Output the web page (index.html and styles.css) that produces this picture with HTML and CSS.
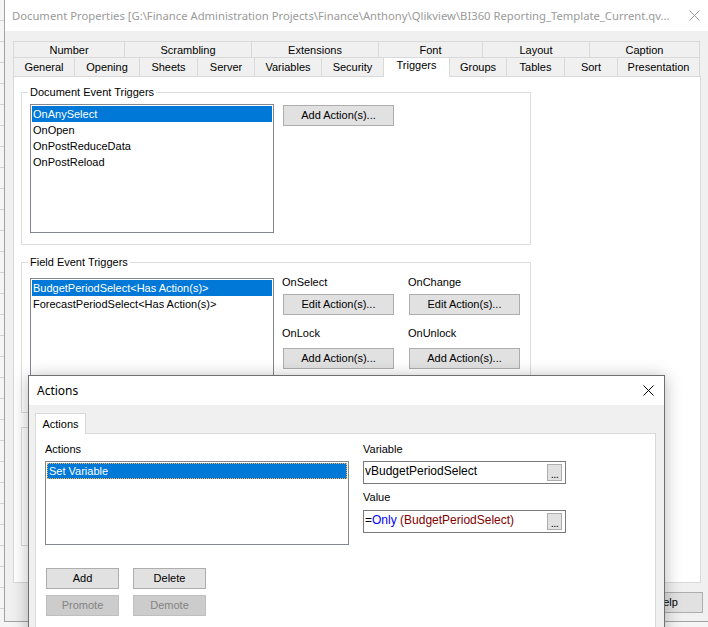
FILE: index.html
```html
<!DOCTYPE html>
<html lang="en">
<head>
<meta charset="utf-8">
<title>Document Properties</title>
<link rel="stylesheet" href="styles.css">
</head>
<body>
<div class="desk">
  <section class="win main">
    <header class="titlebar">
      <span class="title">Document Properties [G:\Finance Administration Projects\Finance\Anthony\Qlikview\BI360 Reporting_Template_Current.qv...</span>
      <svg class="xicon" width="11" height="11" viewBox="0 0 11 11"><path d="M0.5 0.5 L10.5 10.5 M10.5 0.5 L0.5 10.5" stroke="#9a9a9a" stroke-width="1" fill="none"/></svg>
    </header>
    <div class="win-body">
      <div class="tabrow row1">
        <div class="tab">Number</div>
        <div class="tab">Scrambling</div>
        <div class="tab">Extensions</div>
        <div class="tab">Font</div>
        <div class="tab">Layout</div>
        <div class="tab">Caption</div>
      </div>
      <div class="tabrow row2">
        <div class="tab">General</div>
        <div class="tab">Opening</div>
        <div class="tab">Sheets</div>
        <div class="tab">Server</div>
        <div class="tab">Variables</div>
        <div class="tab">Security</div>
        <div class="tab active">Triggers</div>
        <div class="tab">Groups</div>
        <div class="tab">Tables</div>
        <div class="tab">Sort</div>
        <div class="tab">Presentation</div>
      </div>
      <div class="panel">
        <fieldset class="group g1">
          <legend>Document Event Triggers</legend>
          <div class="listbox lb1">
            <div class="item sel">OnAnySelect</div>
            <div class="item">OnOpen</div>
            <div class="item">OnPostReduceData</div>
            <div class="item">OnPostReload</div>
          </div>
          <button class="btn wide b1">Add Action(s)...</button>
        </fieldset>
        <fieldset class="group g2">
          <legend>Field Event Triggers</legend>
          <div class="listbox lb2">
            <div class="item sel">BudgetPeriodSelect&lt;Has Action(s)&gt;</div>
            <div class="item">ForecastPeriodSelect&lt;Has Action(s)&gt;</div>
          </div>
          <div class="ctrls">
            <div class="cell">
              <div class="lbl">OnSelect</div>
              <button class="btn wide">Edit Action(s)...</button>
            </div>
            <div class="cell">
              <div class="lbl">OnChange</div>
              <button class="btn wide">Edit Action(s)...</button>
            </div>
            <div class="cell">
              <div class="lbl">OnLock</div>
              <button class="btn wide">Add Action(s)...</button>
            </div>
            <div class="cell">
              <div class="lbl">OnUnlock</div>
              <button class="btn wide">Add Action(s)...</button>
            </div>
          </div>
        </fieldset>
        <div class="group g3"></div>
      </div>
      <div class="footer">
        <button class="btn">OK</button>
        <button class="btn">Cancel</button>
        <button class="btn">Apply</button>
        <button class="btn help">Help</button>
      </div>
    </div>
  </section>

  <section class="win dialog">
    <header class="dlg-title">
      <span class="title">Actions</span>
      <svg class="xicon" width="11" height="11" viewBox="0 0 11 11"><path d="M0.5 0.5 L10.5 10.5 M10.5 0.5 L0.5 10.5" stroke="#000" stroke-width="1" fill="none"/></svg>
    </header>
    <div class="dlg-body">
      <div class="dtab">Actions</div>
      <div class="dpanel">
        <div class="dcol left">
          <div class="lbl">Actions</div>
          <div class="listbox lb3">
            <div class="item sel focus">Set Variable</div>
          </div>
          <div class="btngrid">
            <button class="btn small">Add</button>
            <button class="btn small">Delete</button>
            <button class="btn small dis">Promote</button>
            <button class="btn small dis">Demote</button>
          </div>
        </div>
        <div class="dcol right">
          <div class="lbl">Variable</div>
          <div class="tbox">
            <span class="tval">vBudgetPeriodSelect</span>
            <span class="dots">...</span>
          </div>
          <div class="lbl lbl2">Value</div>
          <div class="tbox tbox2">
            <span class="tval">=<span class="kw">Only</span><span class="arg"> (BudgetPeriodSelect)</span></span>
            <span class="dots">...</span>
          </div>
        </div>
      </div>
    </div>
  </section>
</div>
</body>
</html>
```
FILE: styles.css
```css
* { box-sizing: border-box; }
html, body { margin: 0; padding: 0; }
body {
  width: 708px;
  height: 627px;
  overflow: hidden;
  background: #f5f5f5 repeating-linear-gradient(to bottom, transparent 0 20px, #d3d3d3 20px 21px);
  font-family: "Liberation Sans", Arial, sans-serif;
  font-size: 11px;
  color: #000;
}
.desk { position: relative; width: 708px; height: 627px; }

/* main window */
.main {
  position: absolute;
  left: 4px;
  top: 0;
  width: 706px;
  height: 622px;
  background: #f0f0f0;
  border: 1px solid #a3a3a3;
  border-top: none;
  display: flex;
  flex-direction: column;
}
.titlebar {
  height: 31px;
  flex: none;
  background: #fff;
  display: flex;
  align-items: center;
  padding: 0 9px 0 7px;
  font-family: "Noto Sans", "Open Sans", sans-serif;
  font-size: 11.25px;
  color: #9a9a9a;
}
.titlebar .title { flex: 1; white-space: nowrap; overflow: hidden; }
.xicon { flex: none; display: block; }

.win-body { padding: 10px 8px 0 8px; }

.tabrow { display: grid; width: 687px; border-right: 1px solid #d9d9d9; }
.row1 { grid-template-columns: 111px 127px 127px 104px 107px 110px; }
.row2 { grid-template-columns: 61px 65px 58px 57px 67px 62px 66px 57px 58px 53px 82px; grid-template-rows: 18px; }
.tab {
  text-align: center;
  white-space: nowrap;
  border-left: 1px solid #d9d9d9;
  background: #f0f0f0;
}
.row1 .tab {
  height: 17px;
  line-height: 16px;
  border-top: 1px solid #d9d9d9;
  border-bottom: 1px solid #d9d9d9;
}
.row2 .tab { height: 18px; line-height: 18px; }
.row2 .tab.active {
  position: relative;
  z-index: 2;
  align-self: start;
  margin-top: -1px;
  height: 20px;
  line-height: 14px;
  background: #fff;
  border-top: 1px solid #d9d9d9;
}

.panel {
  width: 688px;
  height: 507px;
  background: #fff;
  border: 1px solid #d9d9d9;
  padding: 8px 7px;
}

.group {
  width: 510px;
  margin: 0;
  min-width: 0;
  border: 1px solid #dcdcdc;
  padding: 0 8px 11px 8px;
  display: flex;
  align-items: flex-start;
}
.group legend {
  padding: 0 2px;
  margin-left: -2px;
  line-height: 14px;
  font-size: 11px;
}
.g2 { margin-top: 10px; }
.g3 { margin-top: 14px; height: 119px; }

.listbox {
  flex: none;
  background: #fff;
  border: 1px solid #828790;
  padding: 1px;
}
.item { height: 16px; line-height: 16px; padding-left: 1px; white-space: nowrap; }
.item.sel { background: #0078d7; color: #fff; }
.lb1 { width: 244px; height: 129px; margin-top: 5px; }
.lb2 { width: 244px; height: 123px; margin-top: 9px; }

.btn {
  display: block;
  height: 21px;
  margin: 0;
  padding: 0;
  border: 1px solid #adadad;
  background: #e1e1e1;
  font-family: "Liberation Sans", Arial, sans-serif;
  font-size: 11px;
  line-height: 19px;
  color: #000;
  text-align: center;
  white-space: nowrap;
}
.btn.wide { width: 111px; }
.b1 { margin-left: 9px; margin-top: 6px; }

.ctrls {
  margin-left: 9px;
  margin-top: 6px;
  display: grid;
  grid-template-columns: 111px 111px;
  column-gap: 15px;
  row-gap: 11px;
}
.lbl { line-height: 14px; white-space: nowrap; }
.ctrls .lbl { margin-left: -1px; margin-bottom: 5px; }
.ctrls .cell:nth-child(n+3) .lbl { margin-bottom: 8px; }

.footer {
  display: flex;
  justify-content: flex-end;
  gap: 6px;
  margin-top: 9px;
  margin-right: -2px;
}
.footer .btn { width: 73px; }

/* Actions dialog */
.dialog {
  position: absolute;
  left: 28px;
  top: 375px;
  width: 637px;
  height: 262px;
  background: #f0f0f0;
  border: 1px solid #6f6f6f;
  box-shadow: 0 2px 16px rgba(0, 0, 0, 0.28);
  display: flex;
  flex-direction: column;
  z-index: 5;
}
.dlg-title {
  height: 29px;
  flex: none;
  background: #fff;
  display: flex;
  align-items: center;
  padding: 0 10px 0 8px;
  font-family: "Noto Sans", "Open Sans", sans-serif;
  font-size: 12px;
  color: #000;
}
.dlg-title .title { flex: 1; }
.dlg-body { padding: 8px 8px 0 6px; flex: 1; display: flex; flex-direction: column; }
.dtab {
  width: 51px;
  height: 21px;
  line-height: 20px;
  text-align: center;
  background: #fff;
  border: 1px solid #d9d9d9;
  border-bottom: none;
  margin-bottom: -1px;
  position: relative;
  z-index: 1;
}
.dpanel {
  flex: 1;
  background: #fff;
  border: 1px solid #d9d9d9;
  padding: 8px 0 0 9px;
  display: grid;
  grid-template-columns: 304px 203px;
  column-gap: 14px;
  align-items: start;
}
.lb3 { width: 304px; height: 84px; margin-top: 5px; }
.item.focus { outline: 1px dotted #f7b150; outline-offset: -1px; padding-left: 2px; }

.btngrid {
  margin-top: 23px;
  margin-left: 1px;
  display: grid;
  grid-template-columns: 73px 73px;
  column-gap: 14px;
  row-gap: 6px;
}
.btn.small { width: 73px; }
.btn.dis { background: #cccccc; border-color: #bfbfbf; color: #838383; }

.tbox {
  margin-top: 5px;
  height: 23px;
  width: 203px;
  border: 1px solid #7a7a7a;
  background: #fff;
  display: flex;
  align-items: flex-start;
  padding: 0 3px 0 1px;
  font-size: 12px;
}
.tval { flex: 1; line-height: 18px; white-space: nowrap; }
.kw { color: #0000ff; }
.arg { color: #800000; }
.dots {
  flex: none;
  width: 15px;
  height: 17px;
  margin-top: 2px;
  background: #e1e1e1;
  border: 1px solid #adadad;
  font-size: 11px;
  line-height: 18px;
  text-align: center;
  letter-spacing: -0.5px;
}
.lbl2 { margin-top: 6px; }
.tbox2 { margin-top: 6px; }
```
